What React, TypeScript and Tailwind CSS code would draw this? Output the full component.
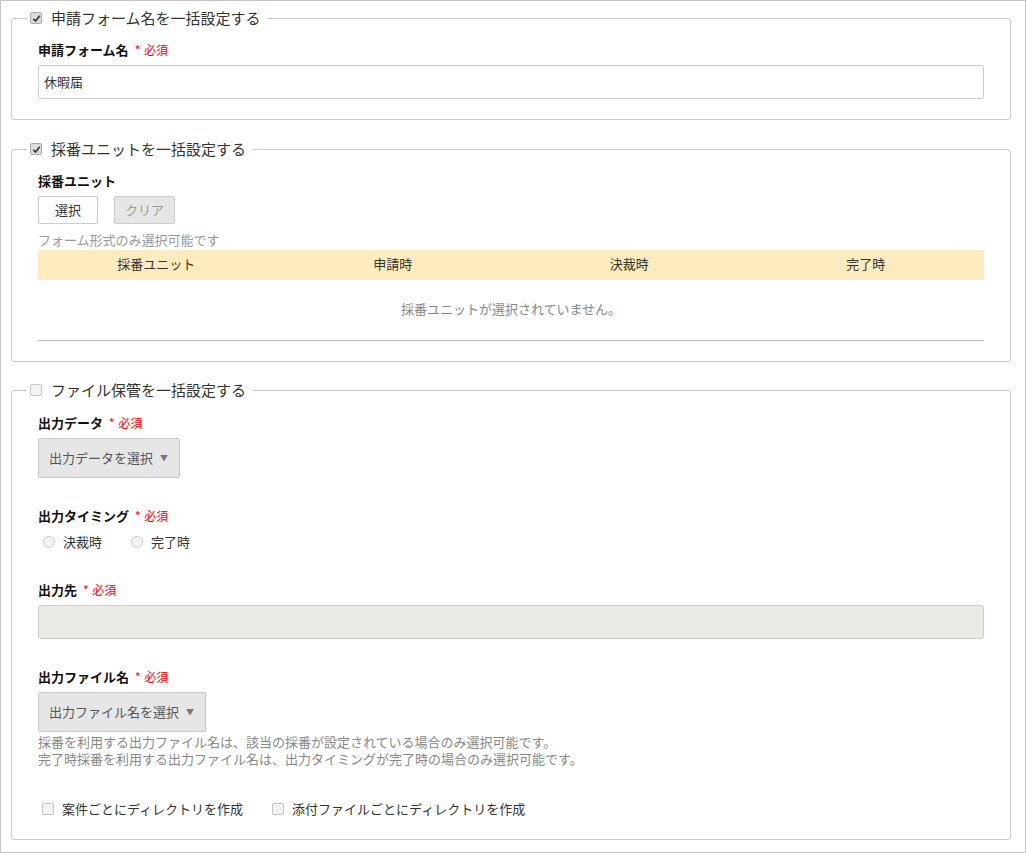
import React from 'react';

const FONT = '"Noto Sans CJK JP", "Noto Sans", sans-serif';

// Small grey checkbox used in legends and the bottom option row
const Check: React.FC<{ checked?: boolean }> = ({ checked }) => (
  <span
    className={`inline-flex h-[12px] w-[12px] items-center justify-center rounded-[2px] border ${
      checked ? 'border-[#a9a9a9] bg-[#dcdcdc]' : 'border-[#c4c4c4] bg-[#f3f3f3]'
    }`}
  >
    {checked && (
      <svg width="9" height="9" viewBox="0 0 10 10">
        <path d="M1.5 5.3 L4 7.8 L8.6 2" fill="none" stroke="#3a3a3a" strokeWidth="2" />
      </svg>
    )}
  </span>
);

const Radio: React.FC<{ label: string }> = ({ label }) => (
  <label className="flex items-center text-[13px] leading-[18px] text-[#333]">
    <span className="ml-[5px] mr-[8px] inline-block h-[12px] w-[12px] rounded-full border border-[#cfcfcf] bg-[#f2f2f2]" />
    {label}
  </label>
);

const Required: React.FC = () => (
  <span className="ml-[6px] font-normal text-[12px] text-[#f00]">
    * <span className="ml-[1px]">必須</span>
  </span>
);

const Label: React.FC<{ text: string; required?: boolean }> = ({ text, required }) => (
  <div className="mb-[6px] text-[13px] font-bold leading-[18px] text-[#111]">
    {text}
    {required && <Required />}
  </div>
);

const SelectButton: React.FC<{ text: string }> = ({ text }) => (
  <button className="flex h-[40px] items-center rounded-[2px] border border-[#c8c8c8] bg-[#e6e6e6] pl-[10px] pr-[11px] text-[13px] text-[#555]">
    {text}
    <span className="ml-[7px] text-[8px] text-[#777]">▼</span>
  </button>
);

const Section: React.FC<{ title: string; checked?: boolean; className?: string; children: React.ReactNode }> = ({
  title,
  checked,
  className = '',
  children,
}) => (
  <fieldset className={`rounded-[3px] border border-[#cccccc] px-[15px] ${className}`}>
    <legend className="flex h-[20px] items-center pl-[3px] pr-[6px] text-[15px] leading-[20px] text-[#333]">
      <Check checked={checked} />
      <span className="ml-[9px]">{title}</span>
    </legend>
    <div className="px-[11px]">{children}</div>
  </fieldset>
);

export default function App() {
  const cols = ['採番ユニット', '申請時', '決裁時', '完了時'];

  return (
    <div className="h-[853px] w-[1026px] border border-[#c6c6c6] bg-white" style={{ fontFamily: FONT }}>
      <div className="ml-[10px] w-[1000px] pt-[7px]">
        <Section title="申請フォーム名を一括設定する" checked className="pb-[20px]">
          <div className="pt-[13px]">
            <Label text="申請フォーム名" required />
            <div className="flex h-[34px] items-center rounded-[3px] border border-[#cccccc] px-[5px] text-[13px] text-[#333]">
              休暇届
            </div>
          </div>
        </Section>

        <Section title="採番ユニットを一括設定する" checked className="mt-[19px] pb-[20px]">
          <div className="pt-[13px]">
            <Label text="採番ユニット" />
            <div className="flex gap-[16px]">
              <button className="h-[28px] w-[60px] rounded-[2px] border border-[#cccccc] bg-white text-[13px] text-[#333]">
                選択
              </button>
              <button className="h-[28px] w-[61px] rounded-[2px] border border-[#cccccc] bg-[#e6e6e6] text-[13px] text-[#999]">
                クリア
              </button>
            </div>
            <div className="mt-[7px] text-[13px] leading-[18px] text-[#999]">フォーム形式のみ選択可能です</div>
            <div className="mt-px">
              <div className="grid h-[30px] grid-cols-4 items-center bg-[#ffebbe] pb-[2px] text-[13px] text-[#333]">
                {cols.map((c) => (
                  <div key={c} className="text-center">
                    {c}
                  </div>
                ))}
              </div>
              <div className="flex h-[61px] items-center justify-center border-b border-[#bbbbbb] pb-[2px] text-[13px] text-[#888]">
                採番ユニットが選択されていません。
              </div>
            </div>
          </div>
        </Section>

        <Section title="ファイル保管を一括設定する" className="mt-[18px] pb-[21px]">
          <div className="pt-[14px]">
            <div className="mb-[29px]">
              <Label text="出力データ" required />
              <SelectButton text="出力データを選択" />
            </div>

            <div className="mb-[30px]">
              <div className="text-[13px] font-bold leading-[18px] text-[#111]">
                出力タイミング
                <Required />
              </div>
              <div className="mt-[8px] flex gap-[24px]">
                <Radio label="決裁時" />
                <Radio label="完了時" />
              </div>
            </div>

            <div className="mb-[29px]">
              <Label text="出力先" required />
              <div className="h-[34px] rounded-[3px] border border-[#cccccc] bg-[#eae9e3]" />
            </div>

            <div>
              <Label text="出力ファイル名" required />
              <SelectButton text="出力ファイル名を選択" />
              <div className="mt-px text-[13px] leading-[17px] text-[#888]">
                <div>採番を利用する出力ファイル名は、該当の採番が設定されている場合のみ選択可能です。</div>
                <div>完了時採番を利用する出力ファイル名は、出力タイミングが完了時の場合のみ選択可能です。</div>
              </div>
            </div>

            <div className="mt-[33px] flex items-center text-[13px] leading-[18px] text-[#333]">
              <span className="ml-[4px] mr-[8px] inline-flex">
                <Check />
              </span>
              案件ごとにディレクトリを作成
              <span className="ml-[29px] mr-[8px] inline-flex">
                <Check />
              </span>
              添付ファイルごとにディレクトリを作成
            </div>
          </div>
        </Section>
      </div>
    </div>
  );
}
